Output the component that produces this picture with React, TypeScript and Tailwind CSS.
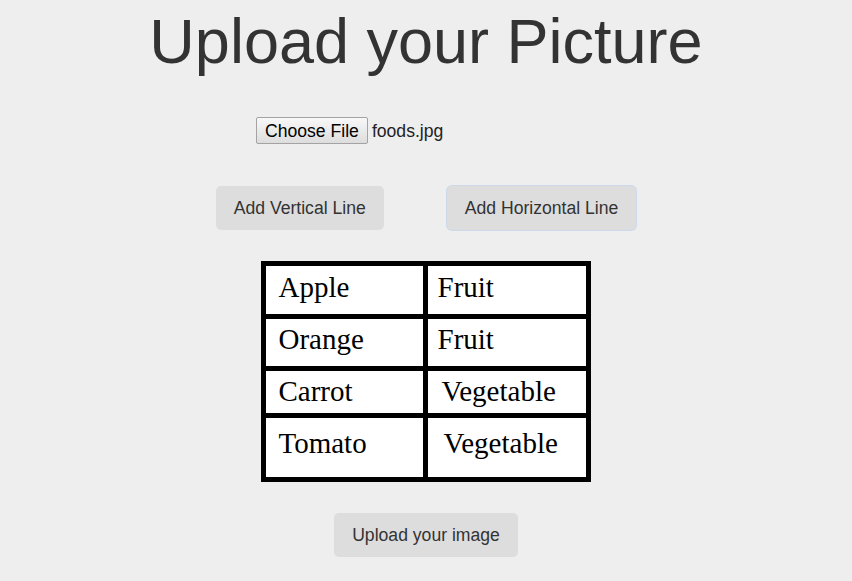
import React from "react";

const rows = [
  { name: "Apple", kind: "Fruit", pt: "pt-[7px]", kindPl: "pl-[10px]" },
  { name: "Orange", kind: "Fruit", pt: "pt-[6px]", kindPl: "pl-[10px]" },
  { name: "Carrot", kind: "Vegetable", pt: "pt-[6px]", kindPl: "pl-[14px]" },
  { name: "Tomato", kind: "Vegetable", pt: "pt-[11px]", kindPl: "pl-[16px]" },
];

function App() {
  const buttonStyle =
    "h-[44px] rounded-[5px] border border-transparent bg-[#dddddd] px-[17px] text-[17.6px] leading-[20px] text-[#333333]";

  return (
    <div className="min-h-[581px] w-full bg-[#eeeeee] pt-[10px] font-['Liberation_Sans',Arial,sans-serif]">
      <h1 className="text-center text-[63px] leading-none text-[#333333]">
        Upload your Picture
      </h1>

      <div className="mx-auto mt-[44px] flex w-[340px] items-center">
        <button className="h-[27px] rounded-[2px] border border-[#a3a3a3] bg-gradient-to-b from-[#f8f8f8] to-[#dddddd] px-[8px] text-[17.6px] leading-[20px] text-black">
          Choose File
        </button>
        <span className="ml-[4px] text-[17.6px] leading-[20px] text-[#222222]">
          foods.jpg
        </span>
      </div>

      <div className="mt-[42px] flex justify-center gap-[63px]">
        <button className={buttonStyle}>Add Vertical Line</button>
        <button
          className={`${buttonStyle} rounded-[3px] border-[#8fb2e6] shadow-[0_0_0_1px_rgba(143,178,230,0.35)]`}
        >
          Add Horizontal Line
        </button>
      </div>

      <div className="mt-[31px] flex justify-center pr-[1px]">
        <div className="grid w-[330px] grid-cols-[157px_158px] grid-rows-[48px_47px_42px_59px] gap-[5px] bg-black p-[5px] font-['Liberation_Serif','Times_New_Roman',serif] text-[29px] leading-[29px] text-black">
          {rows.map((row) => (
            <React.Fragment key={row.name}>
              <div className={`bg-white pl-[13px] ${row.pt}`}>{row.name}</div>
              <div className={`bg-white ${row.kindPl} ${row.pt}`}>
                {row.kind}
              </div>
            </React.Fragment>
          ))}
        </div>
      </div>

      <div className="mt-[31px] flex justify-center">
        <button className={buttonStyle}>Upload your image</button>
      </div>
    </div>
  );
}

export default App;
